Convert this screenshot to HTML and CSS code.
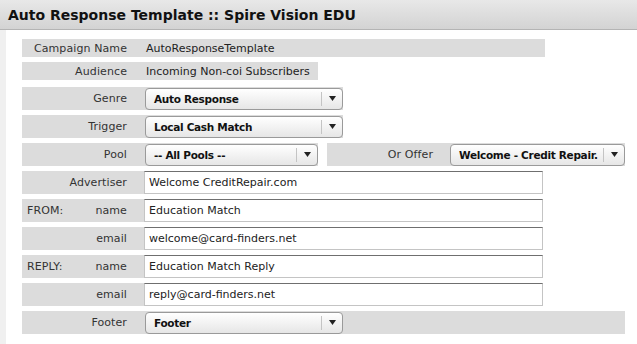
FILE: index.html
```html
<!DOCTYPE html>
<html lang="en">
<head>
  <meta charset="UTF-8" />
  <title>Auto Response Template</title>
  <link rel="stylesheet" href="styles.css">
</head>
<body>

  <header class="titlebar">
    <h1>Auto Response Template :: Spire Vision EDU</h1>
  </header>

  <div class="page">
    <div class="form">

      <div class="row text">
        <div class="label">Campaign Name</div>
        <div class="value w-campaign">AutoResponseTemplate</div>
      </div>

      <div class="row text">
        <div class="label">Audience</div>
        <div class="value w-audience">Incoming Non-coi Subscribers</div>
      </div>

      <div class="row pick first-pick">
        <div class="label">Genre</div>
        <div class="value">
          <div class="select w-wide"><span class="opt">Auto Response</span><span class="arrow"><svg width="7" height="5" viewBox="0 0 7 5"><path d="M0 0h7L3.5 5z" fill="#222"/></svg></span></div>
        </div>
      </div>

      <div class="row pick">
        <div class="label">Trigger</div>
        <div class="value">
          <div class="select w-wide"><span class="opt">Local Cash Match</span><span class="arrow"><svg width="7" height="5" viewBox="0 0 7 5"><path d="M0 0h7L3.5 5z" fill="#222"/></svg></span></div>
        </div>
      </div>

      <div class="row pick">
        <div class="label">Pool</div>
        <div class="value">
          <div class="select w-pool"><span class="opt">-- All Pools --</span><span class="arrow"><svg width="7" height="5" viewBox="0 0 7 5"><path d="M0 0h7L3.5 5z" fill="#222"/></svg></span></div>
        </div>
        <div class="label offer">Or Offer</div>
        <div class="value">
          <div class="select w-offer"><span class="opt">Welcome - Credit Repair.</span><span class="arrow"><svg width="7" height="5" viewBox="0 0 7 5"><path d="M0 0h7L3.5 5z" fill="#222"/></svg></span></div>
        </div>
      </div>

      <div class="row field">
        <div class="label">Advertiser</div>
        <input class="input" type="text" value="Welcome CreditRepair.com">
      </div>

      <div class="row field">
        <div class="label split"><span>FROM:</span><span>name</span></div>
        <input class="input" type="text" value="Education Match">
      </div>

      <div class="row field">
        <div class="label">email</div>
        <input class="input" type="text" value="welcome@card-finders.net">
      </div>

      <div class="row field">
        <div class="label split"><span>REPLY:</span><span>name</span></div>
        <input class="input" type="text" value="Education Match Reply">
      </div>

      <div class="row field">
        <div class="label">email</div>
        <input class="input" type="text" value="reply@card-finders.net">
      </div>

      <div class="row pick footer-row">
        <div class="label">Footer</div>
        <div class="value">
          <div class="select w-wide"><span class="opt">Footer</span><span class="arrow"><svg width="7" height="5" viewBox="0 0 7 5"><path d="M0 0h7L3.5 5z" fill="#222"/></svg></span></div>
        </div>
      </div>

    </div>
  </div>

</body>
</html>
```

FILE: styles.css
```css
body {
  margin: 0;
  font-family: "DejaVu Sans", Verdana, sans-serif;
  font-size: 11px;
  color: #222;
  background: #fff;
}

.titlebar {
  height: 30px;
  background: linear-gradient(#e8e8e8, #d3d3d3);
  border-bottom: 1px solid #b4b4b4;
  box-sizing: border-box;
  padding: 0 8px;
  display: flex;
  align-items: center;
}

.titlebar h1 {
  margin: 0;
  font-size: 14px;
  font-weight: bold;
  color: #111;
}

.page {
  border-left: 6px solid #f0f0f0;
  min-height: 314px;
  box-sizing: border-box;
}

.form {
  display: flex;
  flex-direction: column;
  gap: 5px;
  padding: 9px 0 0 16px;
}

.row {
  display: flex;
  align-items: stretch;
}

.row.text { height: 18px; }
.row.pick { height: 23px; }
.row.field { height: 23px; }
.row.first-pick { margin-top: 2px; }

.label {
  width: 122px;
  box-sizing: border-box;
  background: #dcdcdc;
  color: #333;
  text-align: right;
  padding: 0 17px 0 5px;
  display: flex;
  align-items: center;
  justify-content: flex-end;
  letter-spacing: 0.1px;
}

.label.split { justify-content: space-between; }

.label.offer {
  width: 122px;
  margin-left: 9px;
  padding-right: 16px;
}

.value {
  background: #dcdcdc;
  display: flex;
  align-items: center;
  padding-left: 1px;
}

.w-campaign { width: 399px; padding-left: 2px; }
.w-audience { width: 172px; padding-left: 2px; }

.footer-row .value { flex: 0 0 480px; }

.select {
  height: 22px;
  box-sizing: border-box;
  border: 1px solid #9a9a9a;
  border-radius: 4px;
  background: linear-gradient(#ffffff, #e6e6e6);
  display: flex;
  align-items: center;
  font-weight: bold;
  color: #111;
}

.select .opt {
  flex: 1;
  padding-left: 8px;
  font-size: 10.5px;
  letter-spacing: -0.3px;
  white-space: nowrap;
  overflow: hidden;
}

.select .arrow {
  width: 20px;
  height: 14px;
  border-left: 1px solid #c4c4c4;
  display: flex;
  align-items: center;
  justify-content: center;
}

.w-wide { width: 198px; }
.w-pool { width: 173px; }
.w-offer { width: 175px; }

.input {
  width: 399px;
  height: 23px;
  box-sizing: border-box;
  margin: 0;
  border: 1px solid #c4c4c4;
  border-top-color: #6f6f6f;
  padding: 0 4px;
  font-family: "DejaVu Sans", Verdana, sans-serif;
  font-size: 11px;
  color: #222;
  background: #fff;
  outline: none;
}
```
